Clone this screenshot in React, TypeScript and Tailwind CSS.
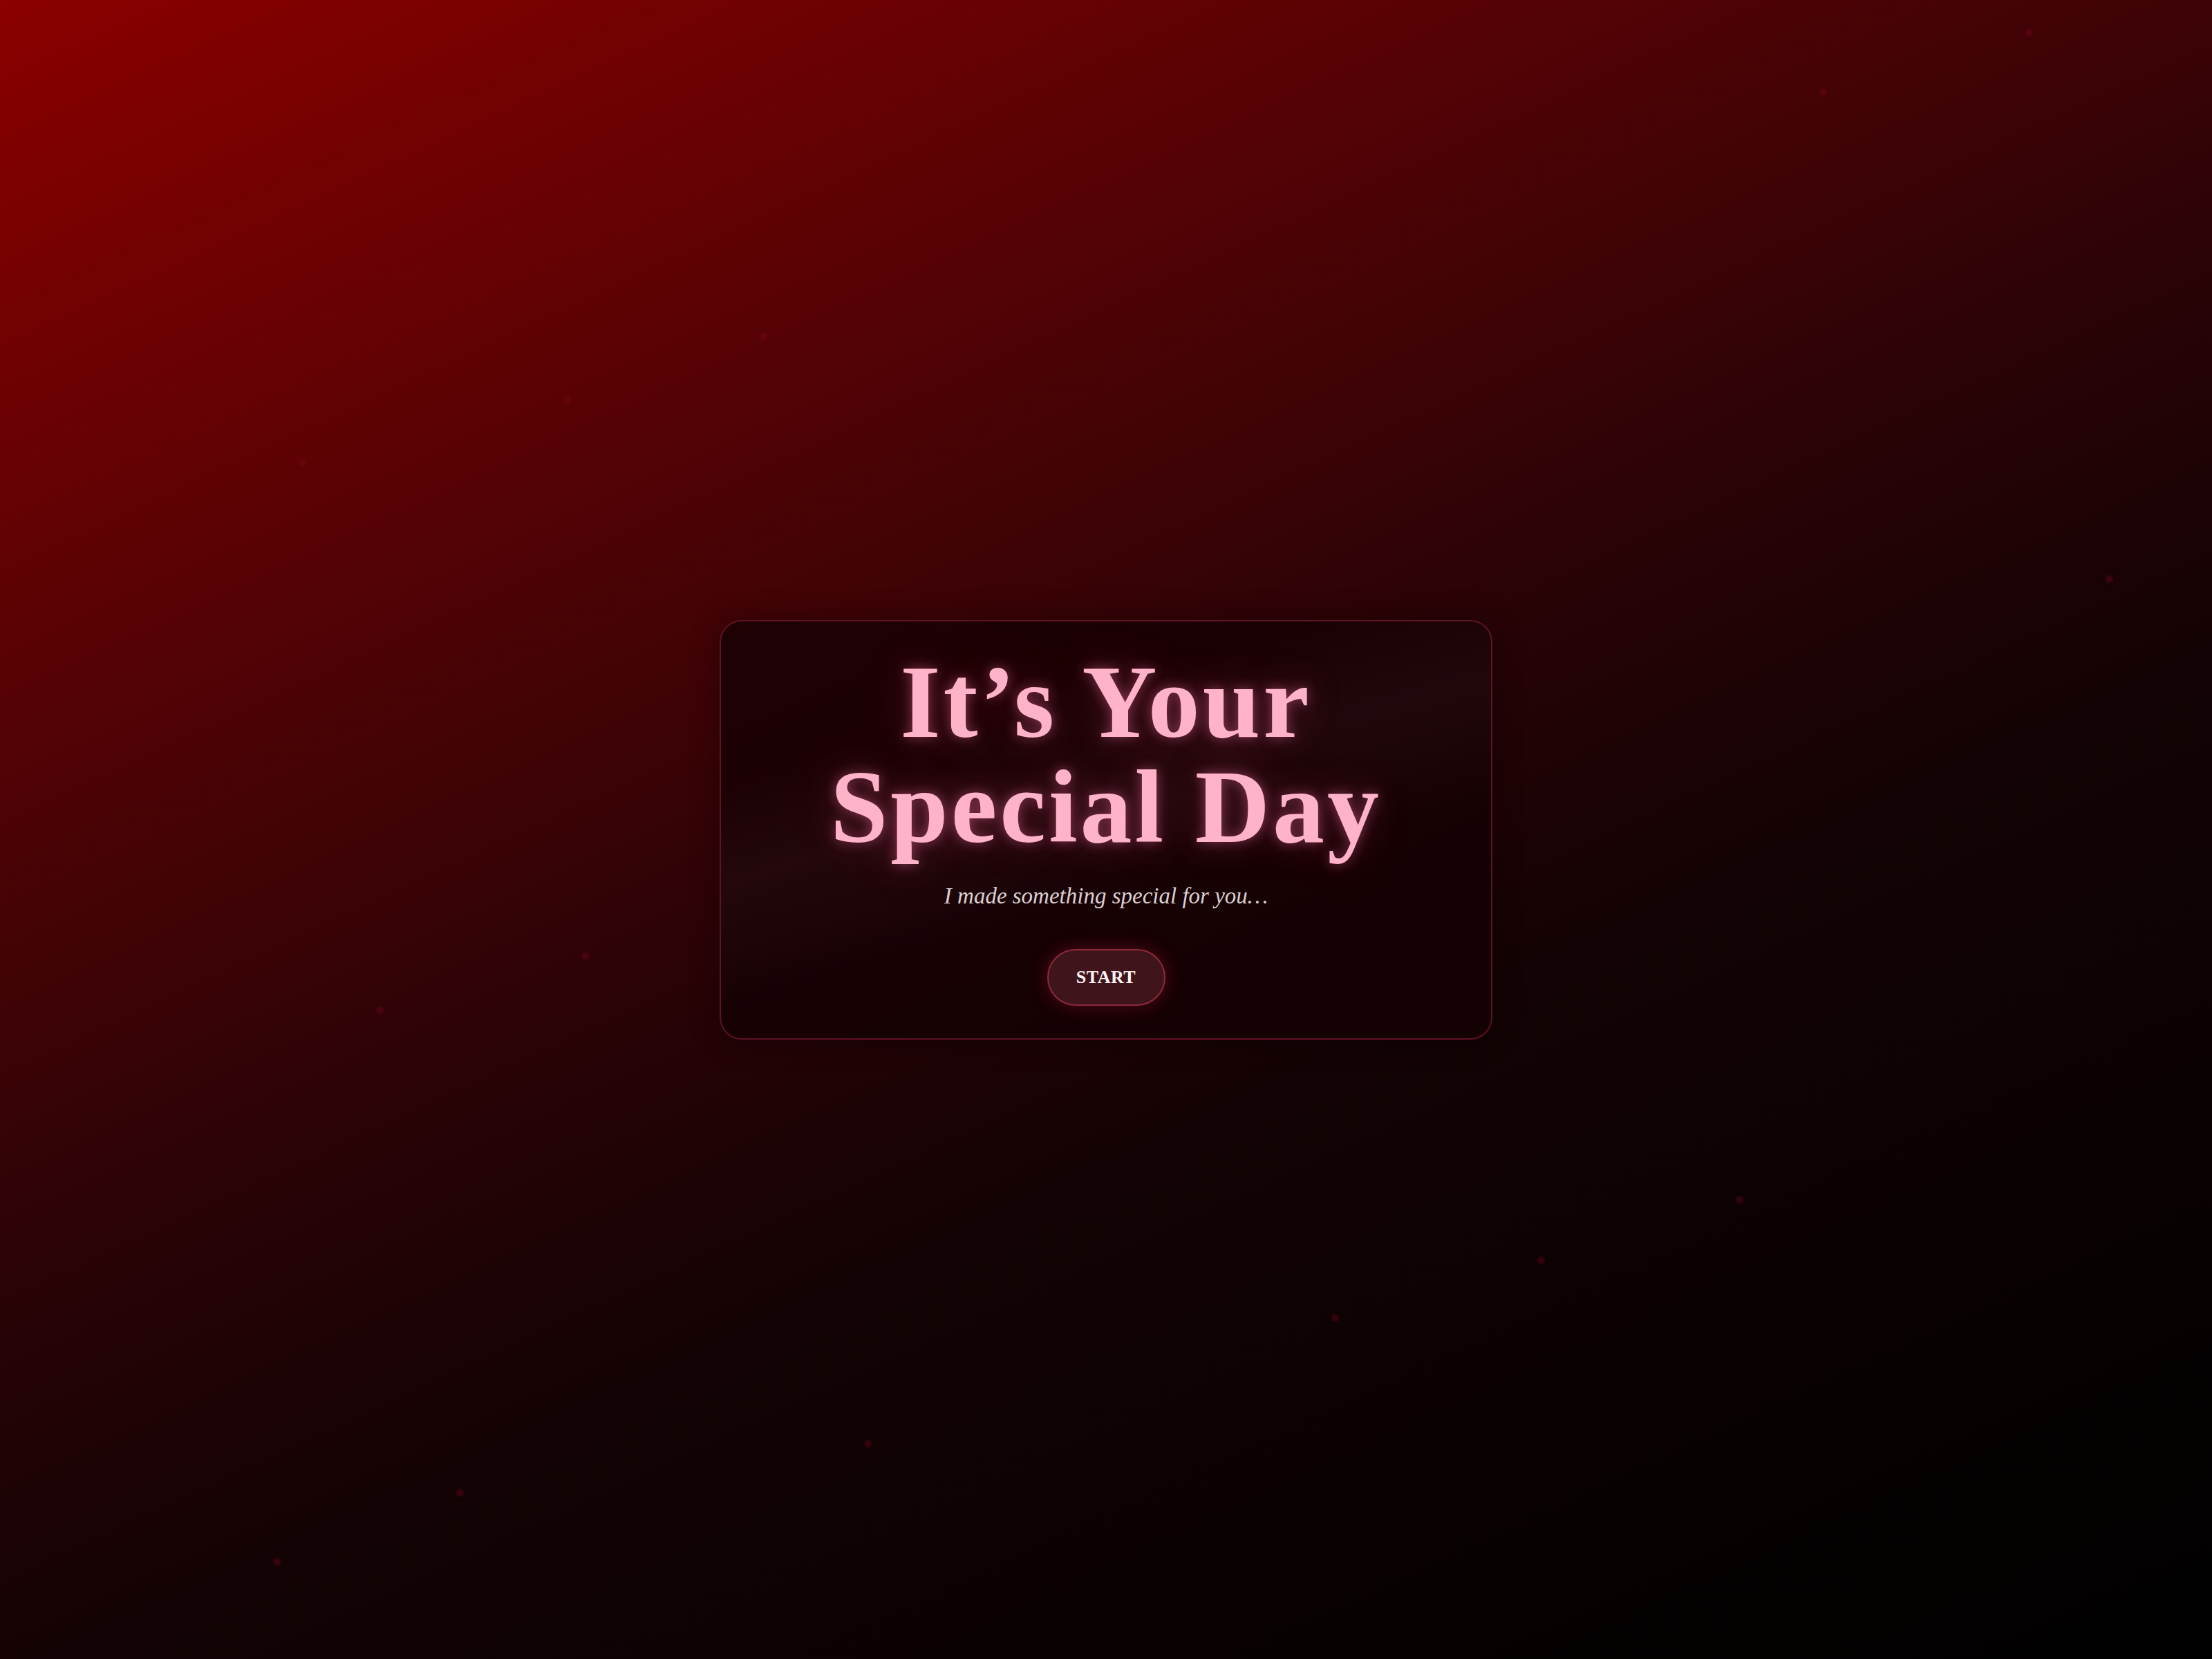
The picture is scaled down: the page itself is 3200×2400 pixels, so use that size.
const sparks = [
  { x: 3051, y: 837 },
  { x: 1104, y: 486 },
  { x: 820, y: 578 },
  { x: 437, y: 669 },
  { x: 847, y: 1382 },
  { x: 549, y: 1461 },
  { x: 2516, y: 1735 },
  { x: 2229, y: 1823 },
  { x: 1931, y: 1906 },
  { x: 1255, y: 2088 },
  { x: 665, y: 2159 },
  { x: 400, y: 2259 },
  { x: 2935, y: 47 },
  { x: 2637, y: 133 },
];

export default function App() {
  return (
    <div className="relative flex min-h-screen w-full items-center justify-center overflow-hidden bg-[linear-gradient(155deg,#8b0000_0%,#420306_36%,#260306_50%,#130304_63%,#000000_100%)] font-['Liberation_Serif',serif]">
      {sparks.map((s, i) => (
        <span
          key={i}
          className="absolute h-[11px] w-[11px] rounded-full bg-[#7a0a22]/35 blur-[1.5px]"
          style={{ left: s.x - 5, top: s.y - 5 }}
        />
      ))}

      <section className="relative flex w-[1118px] flex-col items-center overflow-hidden rounded-[32px] border-2 border-[#5e1222] bg-[#120003]/75 pt-[40px] pb-[47px] shadow-[0_0_40px_rgba(0,0,0,0.35)]">
        {/* soft diagonal sheen behind the heading */}
        <div className="pointer-events-none absolute inset-0 bg-[linear-gradient(165deg,transparent_25%,rgba(255,170,200,0.04)_42%,rgba(255,170,200,0.025)_52%,transparent_62%)]" />

        <h1 className="relative text-center text-[150px] font-bold leading-[152px] tracking-[4px] text-[#ffb3c9] [text-shadow:0_0_18px_rgba(255,120,170,0.45),0_0_60px_rgba(255,90,140,0.25)]">
          It’s Your
          <br />
          Special Day
        </h1>

        <p className="relative mt-[33px] text-[33px] italic leading-[40px] text-[#dccfd1]">
          I made something special for you…
        </p>

        <button className="relative mt-[57px] flex h-[82px] w-[171px] items-center justify-center rounded-full border-2 border-[#8c2a3b] bg-[#3f151b] text-[26px] font-bold tracking-[0.5px] text-[#fff4f4] shadow-[0_0_26px_rgba(200,30,70,0.35)]">
          START
        </button>
      </section>
    </div>
  );
}
